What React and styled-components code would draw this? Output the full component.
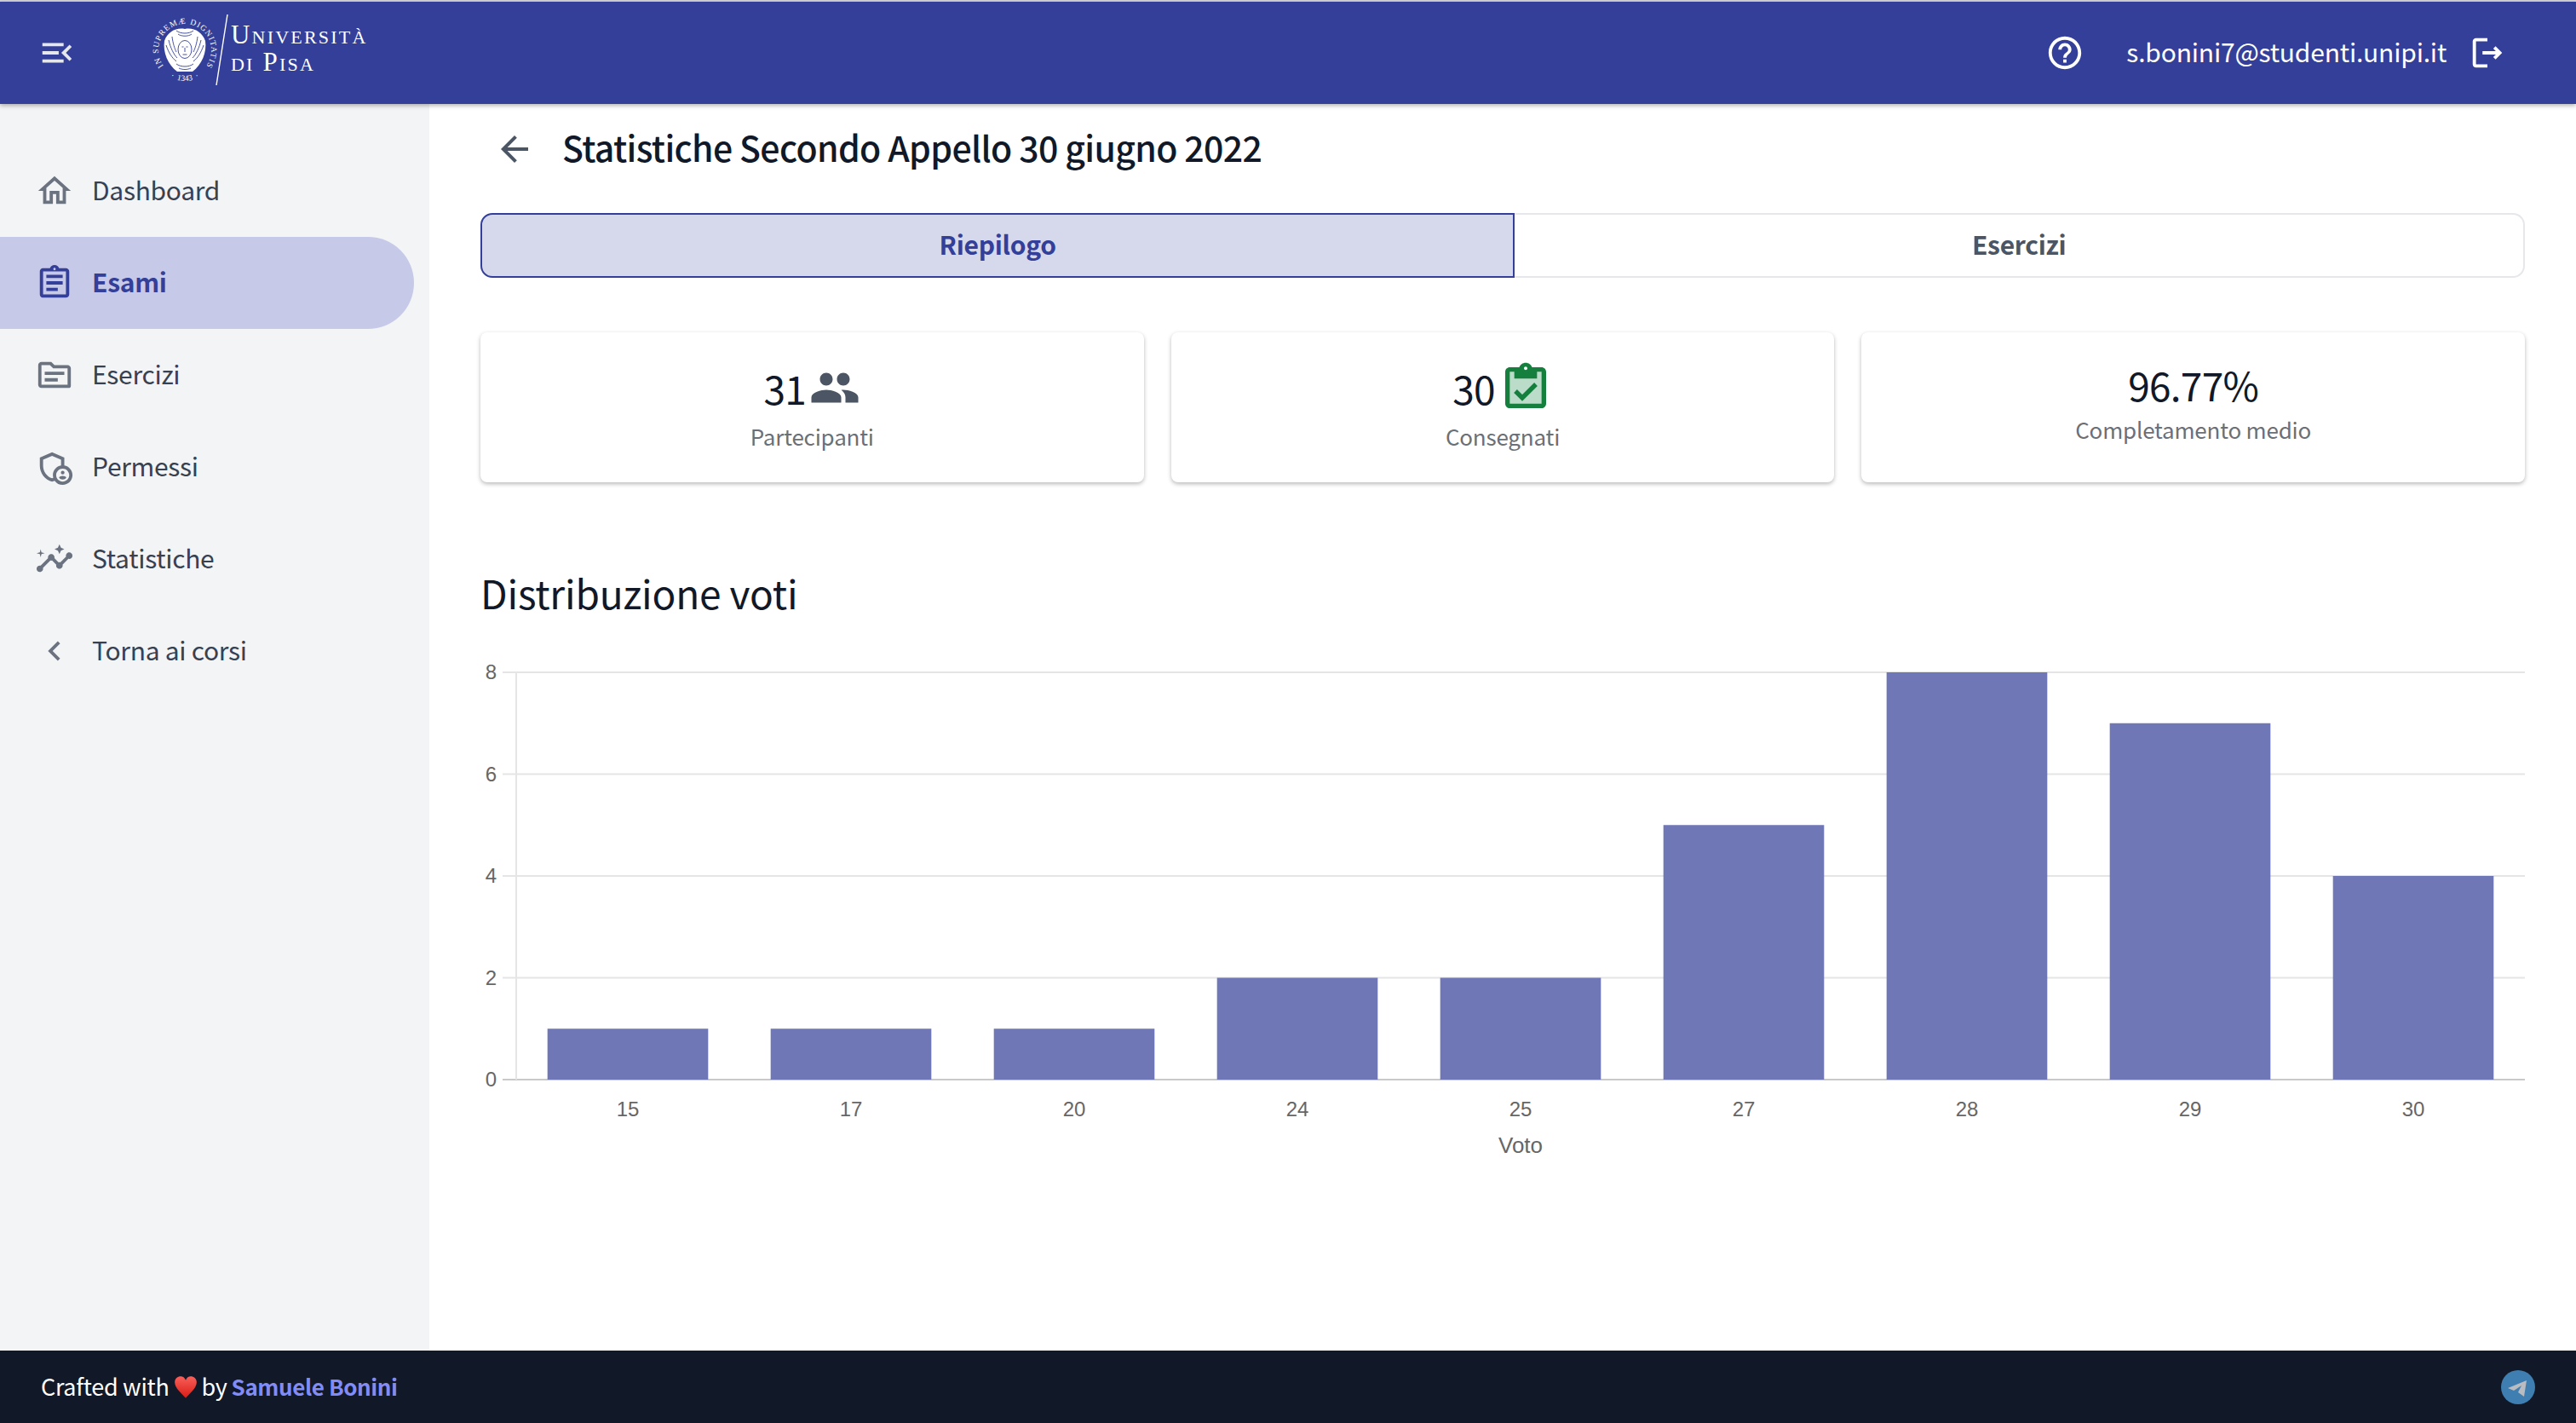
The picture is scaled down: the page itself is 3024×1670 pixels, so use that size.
import { createGlobalStyle } from "styled-components";
import styled from "styled-components";
import {
  MdMenuOpen,
  MdHelpOutline,
  MdOutlineLogout,
  MdOutlineHome,
  MdOutlineAssignment,
  MdOutlineTopic,
  MdOutlineAdminPanelSettings,
  MdOutlineInsights,
  MdChevronLeft,
  MdArrowBack,
  MdPeople,
} from "react-icons/md";

const GlobalStyle = createGlobalStyle`
  html, body {
    margin: 0;
    padding: 0;
    background: #fff;
  }
  body {
    font-family: "Noto Sans CJK SC", "Noto Sans", sans-serif;
    color: #111827;
  }
`;

const Page = styled.div`
  display: flex;
  flex-direction: column;
  height: 1670px;
  border-top: 2px solid #d1d1d6;
  box-sizing: border-box;
`;

const Header = styled.header`
  position: relative;
  z-index: 2;
  display: flex;
  align-items: center;
  flex: 0 0 120px;
  padding: 0 81px 0 44px;
  background: #343f99;
  color: #fff;
  box-shadow: 0 2px 5px rgba(0, 0, 0, 0.3);
`;

const MenuIcon = styled(MdMenuOpen)`
  width: 46px;
  height: 46px;
  color: #e5e7eb;
`;

const Logo = styled.svg`
  width: 260px;
  height: 90px;
  margin-left: 87px;
  fill: #fff;
`;

const LogoText = styled.text`
  font-family: "Liberation Serif", serif;
  font-size: 31px;
  font-variant: small-caps;
  letter-spacing: 2.2px;
`;

const SealText = styled.text`
  font-family: "Liberation Serif", serif;
  font-size: 9.5px;
`;

const HeaderRight = styled.div`
  display: flex;
  align-items: center;
  margin-left: auto;
`;

const HelpIcon = styled(MdHelpOutline)`
  width: 46px;
  height: 46px;
  margin-right: 49px;
`;

const Email = styled.span`
  font-size: 30px;
  letter-spacing: -0.2px;
  margin: 0 25px 4px 0;
`;

const LogoutIcon = styled(MdOutlineLogout)`
  width: 46px;
  height: 46px;
`;

const Body = styled.div`
  display: flex;
  flex: 1;
  min-height: 0;
`;

const Sidebar = styled.nav`
  flex: 0 0 504px;
  padding: 48px 18px 0 0;
  box-sizing: border-box;
  background: #f3f4f6;
`;

const NavItem = styled.div`
  display: flex;
  align-items: center;
  height: 108px;
  padding-left: 41px;
  gap: 21px;
  border-radius: 0 54px 54px 0;
  font-size: 30px;
  letter-spacing: -0.3px;
  font-weight: ${(p) => (p.$active ? 600 : 400)};
  color: ${(p) => (p.$active ? "#343f99" : "#374151")};
  background: ${(p) => (p.$active ? "#c7c9e8" : "transparent")};

  svg {
    width: 46px;
    height: 46px;
    flex: none;
    color: ${(p) => (p.$active ? "#343f99" : "#6b7280")};
  }
`;

const NavLabel = styled.span`
  margin-bottom: 4px;
`;

const Content = styled.main`
  flex: 1;
  padding: 0 60px;
`;

const TitleRow = styled.div`
  display: flex;
  align-items: center;
  gap: 32px;
  height: 106px;
  margin-bottom: 22px;
  padding-left: 16px;
`;

const BackIcon = styled(MdArrowBack)`
  width: 48px;
  height: 48px;
  color: #4b5563;
`;

const Title = styled.h1`
  margin: 0 0 6px;
  font-size: 41px;
  letter-spacing: -0.65px;
  font-weight: 500;
  color: #111827;
`;

const Tabs = styled.div`
  display: flex;
  height: 76px;
`;

const Tab = styled.div`
  flex: 1 1 auto;
  display: flex;
  align-items: center;
  justify-content: center;
  box-sizing: border-box;
  padding-bottom: 4px;
  font-size: 30px;
  letter-spacing: -0.3px;
  font-weight: 600;
  color: ${(p) => (p.$active ? "#343f99" : "#4b5563")};
  background: ${(p) => (p.$active ? "#d6d9ec" : "#fff")};
  border: 2px solid ${(p) => (p.$active ? "#343f99" : "#e5e7eb")};
  border-left-width: ${(p) => (p.$active ? "2px" : 0)};
  border-radius: ${(p) => (p.$active ? "14px 0 0 14px" : "0 14px 14px 0")};
`;

const Stats = styled.div`
  display: grid;
  grid-template-columns: repeat(3, 1fr);
  gap: 32px;
  margin-top: 64px;
`;

const StatCard = styled.div`
  display: flex;
  flex-direction: column;
  align-items: center;
  height: 176px;
  box-sizing: border-box;
  padding-top: ${(p) => (p.$icon ? "32px" : "34px")};
  border-radius: 8px;
  background: #fff;
  box-shadow: 0 2px 5px rgba(0, 0, 0, 0.28);
`;

const StatValue = styled.div`
  display: flex;
  align-items: center;
  gap: ${(p) => (p.$icon ? "4px" : 0)};
  height: ${(p) => (p.$icon ? "65px" : "53px")};
  font-size: 46px;
  letter-spacing: -0.7px;
  color: #111827;
`;

const StatLabel = styled.div`
  margin-top: ${(p) => (p.$icon ? "6px" : "8px")};
  font-size: 26px;
  line-height: 38px;
  letter-spacing: -0.2px;
  color: #6b6f76;
`;

const PeopleIcon = styled(MdPeople)`
  width: 60px;
  height: 60px;
  color: #4b5563;
`;

const CheckIcon = styled.svg`
  width: 64px;
  height: 64px;
`;

const ChartTitle = styled.h2`
  margin: 99px 0 0;
  font-size: 46px;
  line-height: 60px;
  letter-spacing: -0.2px;
  font-weight: 400;
  color: #111827;
`;

const Chart = styled.svg`
  display: block;
  width: 2400px;
  height: 600px;
  margin-top: 45px;
`;

const AxisText = styled.text`
  font-family: "Liberation Sans", sans-serif;
  font-size: ${(p) => (p.$title ? "26px" : "24px")};
  fill: #666;
`;

const Footer = styled.footer`
  display: flex;
  align-items: center;
  justify-content: space-between;
  flex: 0 0 85px;
  padding: 0 48px;
  background: #111827;
  color: #fff;
  font-size: 27px;
  letter-spacing: -0.3px;
`;

const Credit = styled.div`
  display: flex;
  align-items: center;
  gap: 5px;
  margin-bottom: 3px;
`;

const Author = styled.span`
  font-size: 26px;
  letter-spacing: -0.4px;
  color: #818cf8;
  font-weight: 600;
`;

const Heart = styled.svg`
  width: 28px;
  height: 28px;
  margin-top: 3px;
`;

const Telegram = styled.svg`
  width: 40px;
  height: 40px;
`;

const nav = [
  { label: "Dashboard", icon: MdOutlineHome },
  { label: "Esami", icon: MdOutlineAssignment, active: true },
  { label: "Esercizi", icon: MdOutlineTopic },
  { label: "Permessi", icon: MdOutlineAdminPanelSettings },
  { label: "Statistiche", icon: MdOutlineInsights },
  { label: "Torna ai corsi", icon: MdChevronLeft },
];

const grades = [
  { voto: "15", count: 1 },
  { voto: "17", count: 1 },
  { voto: "20", count: 1 },
  { voto: "24", count: 2 },
  { voto: "25", count: 2 },
  { voto: "27", count: 5 },
  { voto: "28", count: 8 },
  { voto: "29", count: 7 },
  { voto: "30", count: 4 },
];

const AXIS_X = 42;
const BASE_Y = 497;
const UNIT = 59.75;
const CATEGORY = (2400 - AXIS_X) / grades.length;
const BAR = CATEGORY * 0.72;

const Seal = () => (
  <g>
    <defs>
      <path id="sealArc" d="M15 60.3 A31 31 0 1 1 65 60.3" />
      <path id="sealYear" d="M18 70.5 A36 36 0 0 0 62 70.5" />
    </defs>
    <SealText>
      <textPath href="#sealArc" textLength="136">
        IN SUPREMÆ DIGNITATIS
      </textPath>
    </SealText>
    <SealText>
      <textPath href="#sealYear" startOffset="50%" textAnchor="middle">
        {"·\u00a0\u00a01343\u00a0\u00a0·"}
      </textPath>
    </SealText>
    {/* the two wings and the head in the middle */}
    <path d="M40 17 C50 15 60 20 64 31 C66 44 60 59 49 67 L31 67 C20 59 14 44 16 31 C20 20 30 15 40 17 Z" />
    <g fill="none" stroke="#343f99" strokeWidth="0.9">
      <path d="M30 19 C35 23 45 23 50 19" />
      <path d="M32 23 C36 26 44 26 48 23" />
      <path d="M18 36 C21 45 25 51 30 55" />
      <path d="M21 30 C23 39 27 47 31 51" />
      <path d="M25 26 C26 34 28 40 30 44" />
      <path d="M62 36 C59 45 55 51 50 55" />
      <path d="M59 30 C57 39 53 47 49 51" />
      <path d="M55 26 C54 34 52 40 50 44" />
      <path d="M30 58 C35 62 45 62 50 58" />
      <path d="M33 63 C37 65 43 65 47 63" />
      <ellipse cx="40" cy="41" rx="8" ry="10.5" />
      <path d="M36.5 38 H38.5 M41.5 38 H43.5 M40 39 V44 M37.5 47 H42.5" />
    </g>
    <path d="M90 0 L77 83" fill="none" stroke="#fff" strokeWidth="1.4" />
  </g>
);

const App = () => {
  return (
    <Page>
      <GlobalStyle />
      <Header>
        <MenuIcon />
        <Logo viewBox="0 0 260 90">
          <Seal />
          <LogoText x="94" y="34">
            Università
          </LogoText>
          <LogoText x="94" y="66">
            di Pisa
          </LogoText>
        </Logo>
        <HeaderRight>
          <HelpIcon />
          <Email>s.bonini7@studenti.unipi.it</Email>
          <LogoutIcon />
        </HeaderRight>
      </Header>

      <Body>
        <Sidebar>
          {nav.map((item) => (
            <NavItem key={item.label} $active={item.active}>
              <item.icon />
              <NavLabel>{item.label}</NavLabel>
            </NavItem>
          ))}
        </Sidebar>

        <Content>
          <TitleRow>
            <BackIcon />
            <Title>Statistiche Secondo Appello 30 giugno 2022</Title>
          </TitleRow>

          <Tabs>
            <Tab $active>Riepilogo</Tab>
            <Tab>Esercizi</Tab>
          </Tabs>

          <Stats>
            <StatCard $icon>
              <StatValue $icon>
                31
                <PeopleIcon />
              </StatValue>
              <StatLabel $icon>Partecipanti</StatLabel>
            </StatCard>
            <StatCard $icon>
              <StatValue $icon>
                30
                <CheckIcon viewBox="0 0 24 24">
                  <path d="M4.5 4.5H8V7h8V4.5h3.5v16h-15z" fill="#bbdcc8" />
                  <path
                    d="M19 3h-4.18C14.4 1.84 13.3 1 12 1s-2.4.84-2.82 2H5c-1.1 0-2 .9-2 2v14c0 1.1.9 2 2 2h14c1.1 0 2-.9 2-2V5c0-1.1-.9-2-2-2zm-7-.25c.41 0 .75.34.75.75s-.34.75-.75.75-.75-.34-.75-.75.34-.75.75-.75zM19 19H5V5h2v3h10V5h2v14z"
                    fill="#15803d"
                  />
                  <path
                    d="M7.5 13.5l3 3 6-6"
                    fill="none"
                    stroke="#15803d"
                    strokeWidth="2"
                  />
                </CheckIcon>
              </StatValue>
              <StatLabel $icon>Consegnati</StatLabel>
            </StatCard>
            <StatCard>
              <StatValue>96.77%</StatValue>
              <StatLabel>Completamento medio</StatLabel>
            </StatCard>
          </Stats>

          <ChartTitle>Distribuzione voti</ChartTitle>

          <Chart viewBox="0 0 2400 600">
            {[0, 2, 4, 6, 8].map((tick) => {
              const y = BASE_Y - tick * UNIT;
              return (
                <g key={tick}>
                  <line
                    x1="26"
                    x2="2400"
                    y1={y}
                    y2={y}
                    stroke={tick === 0 ? "#c9c9c9" : "#e5e5e5"}
                    strokeWidth="2"
                  />
                  <AxisText x="19" y={y + 8} textAnchor="end">
                    {tick}
                  </AxisText>
                </g>
              );
            })}
            <line
              x1={AXIS_X}
              x2={AXIS_X}
              y1={BASE_Y - 8 * UNIT}
              y2={BASE_Y}
              stroke="#e5e5e5"
              strokeWidth="2"
            />
            {grades.map((g, i) => {
              const center = AXIS_X + CATEGORY * (i + 0.5);
              return (
                <g key={g.voto}>
                  <rect
                    x={center - BAR / 2}
                    y={BASE_Y - g.count * UNIT}
                    width={BAR}
                    height={g.count * UNIT}
                    fill="#7077b7"
                  />
                  <AxisText x={center} y="540" textAnchor="middle">
                    {g.voto}
                  </AxisText>
                </g>
              );
            })}
            <AxisText
              $title
              x={AXIS_X + CATEGORY * 4.5}
              y="583"
              textAnchor="middle"
            >
              Voto
            </AxisText>
          </Chart>
        </Content>
      </Body>

      <Footer>
        <Credit>
          Crafted with
          <Heart viewBox="0 0 24 24">
            <defs>
              <linearGradient id="heartFill" x1="0" y1="0" x2="0" y2="1">
                <stop offset="0" stopColor="#f8605a" />
                <stop offset="1" stopColor="#d91c14" />
              </linearGradient>
            </defs>
            <path
              d="M12 23 C8 18 1 13 1 7 C1 3 4 1 7 1 C9 1 11 2 12 5 C13 2 15 1 17 1 C20 1 23 3 23 7 C23 13 16 18 12 23 Z"
              fill="url(#heartFill)"
            />
          </Heart>
          by <Author>Samuele Bonini</Author>
        </Credit>
        <Telegram viewBox="0 0 40 40">
          <circle cx="20" cy="20" r="20" fill="#3f7eb0" />
          <path d="M8 21 L30 12 L27 31 L20 26 L24 18 L15 24 Z" fill="#b9bcc0" />
        </Telegram>
      </Footer>
    </Page>
  );
};

export default App;
